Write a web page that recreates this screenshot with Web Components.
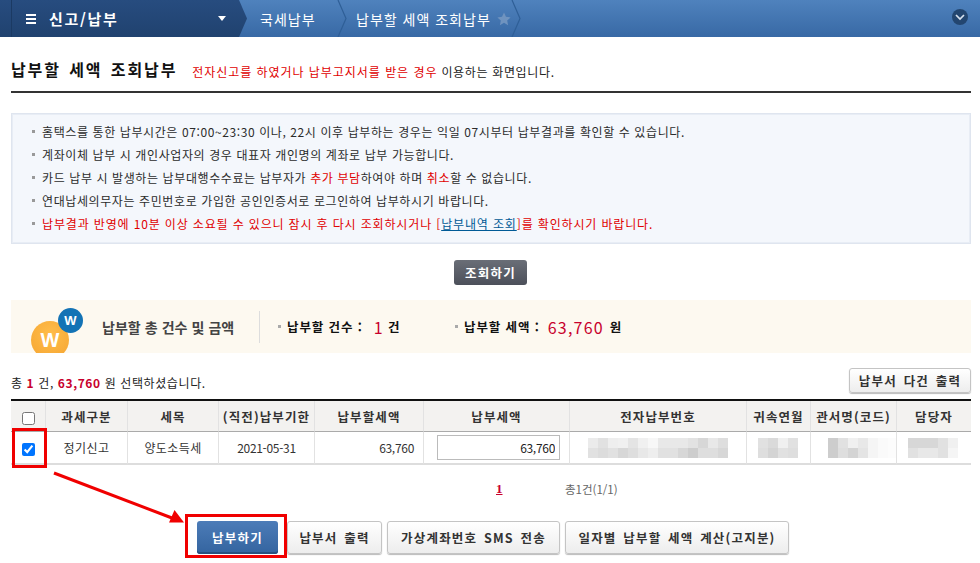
<!DOCTYPE html>
<html lang="ko">
<head>
<meta charset="utf-8">
<title>납부할 세액 조회납부</title>
<style>
  html, body { margin: 0; padding: 0; background: #fff; }
  body {
    width: 980px;
    height: 563px;
    overflow: hidden;
    position: relative;
    font-family: "Noto Sans CJK KR", "Noto Sans", sans-serif;
    font-size: 12px;
    color: #333;
  }
  .red { color: #e00000; }
  .link { color: #005a96; text-decoration: underline; }
  .wide { letter-spacing: .95px; }
  .lead { letter-spacing: .85px; }
  nt-toolbar b { color: #c8002d; }
</style>
</head>
<body>
<nt-topbar></nt-topbar>
<nt-page>
  <nt-heading title="납부할 세액 조회납부">
    <span class="red wide">전자신고를 하였거나 납부고지서를 받은 경우</span> 이용하는 화면입니다.
  </nt-heading>
  <nt-notice>
    <nt-note>홈택스를 통한 납부시간은 07:00~23:30 이나, 22시 이후 납부하는 경우는 익일 07시부터 납부결과를 확인할 수 있습니다.</nt-note>
    <nt-note>계좌이체 납부 시 개인사업자의 경우 대표자 개인명의 계좌로 납부 가능합니다.</nt-note>
    <nt-note>카드 납부 시 발생하는 납부대행수수료는 납부자가 <span class="red">추가 부담</span>하여야 하며 <span class="red">취소</span>할 수 없습니다.</nt-note>
    <nt-note>연대납세의무자는 주민번호로 가입한 공인인증서로 로그인하여 납부하시기 바랍니다.</nt-note>
    <nt-note><span class="red lead">납부결과 반영에 10분 이상 소요될 수 있으니 잠시 후 다시 조회하시거나 [<span class="link">납부내역 조회</span>]를 확인하시기 바랍니다.</span></nt-note>
  </nt-notice>
  <nt-search-row><nt-button variant="dark" width="73">조회하기</nt-button></nt-search-row>
  <nt-summary></nt-summary>
  <nt-toolbar>
    <span slot="info">총 <b>1</b> 건, <b>63,760</b> 원 선택하셨습니다.</span>
    <nt-button slot="action" width="122" height="25">납부서 다건 출력</nt-button>
  </nt-toolbar>
  <nt-table></nt-table>
  <nt-pager></nt-pager>
  <nt-actions>
    <nt-button variant="primary" width="81" height="33">납부하기</nt-button>
    <nt-button width="95" height="33" style="margin-left:4px">납부서 출력</nt-button>
    <nt-button width="173" height="33">가상계좌번호 SMS 전송</nt-button>
    <nt-button width="224" height="33">일자별 납부할 세액 계산(고지분)</nt-button>
  </nt-actions>
</nt-page>
<nt-callouts></nt-callouts>

<script>
class NtTopbar extends HTMLElement {
  connectedCallback() {
    const chevron = `<svg class="sep" width="10" height="37" viewBox="0 0 10 37"><path d="M1 0 L9 18.5 L1 37" fill="none" stroke="#2f5f97" stroke-width="1.2"/></svg>`;
    this.attachShadow({ mode: 'open' }).innerHTML = `
      <style>
        :host {
          display: flex;
          height: 37px;
          align-items: stretch;
          background: linear-gradient(#4f82bd, #3869a5);
          color: #fff;
        }
        .menu {
          width: 247px;
          box-sizing: border-box;
          display: flex;
          align-items: center;
          padding-left: 26px;
          background: linear-gradient(#274c7f, #20426f);
          clip-path: polygon(0 0, 239px 0, 247px 18.5px, 239px 37px, 0 37px);
          position: relative;
        }
        .stripe { position: absolute; left: 11px; top: 0; bottom: 0; width: 1px; background: #1b3a63; }
        .burger { width: 10px; height: 10px; display: block; }
        .name { margin-left: 13px; font-size: 15px; font-weight: 700; letter-spacing: 1.7px; width: 169px; }
        .caret { width: 0; height: 0; border: 4px solid transparent; border-top: 5px solid #fff; border-bottom: 0; }
        .crumb { font-size: 14px; letter-spacing: 1px; display: flex; align-items: center; white-space: nowrap; }
        .sep { display: block; flex: none; }
        .star { margin-left: 6px; display: block; }
        .more {
          margin: 9px 12px 0 auto;
          width: 16px; height: 16px;
          border-radius: 50%;
          background: #234670;
          display: flex; align-items: center; justify-content: center;
        }
      </style>
      <div class="menu">
        <span class="stripe"></span>
        <svg class="burger" viewBox="0 0 10 10"><path d="M0 0h10v2H0zM0 4h10v2H0zM0 8h10v2H0z" fill="#fff"/></svg>
        <span class="name">신고/납부</span>
        <span class="caret"></span>
      </div>
      <span class="crumb" style="margin-left:13px;width:77px">국세납부</span>
      ${chevron}
      <span class="crumb" style="margin-left:9px;width:135px">납부할 세액 조회납부</span>
      <svg class="star" width="14" height="14" viewBox="0 0 24 24" style="align-self:center"><path d="M12 1l3.400 7.300 7.900 1-5.800 5.400 1.500 7.800L12 18.600 5 22.500l1.500-7.800L.7 9.300l7.900-1z" fill="#6f93bf"/></svg>
      ${chevron}
      <span class="more"><svg width="10" height="7" viewBox="0 0 10 7"><path d="M1 1l4 4 4-4" fill="none" stroke="#d8e2ee" stroke-width="1.7"/></svg></span>
    `;
  }
}

class NtPage extends HTMLElement {
  constructor() {
    super();
    this.attachShadow({ mode: 'open' }).innerHTML = `
      <style>
        :host { display: flex; flex-direction: column; padding: 0 9px 0 11px; }
      </style>
      <slot></slot>
    `;
  }
}

class NtHeading extends HTMLElement {
  connectedCallback() {
    this.attachShadow({ mode: 'open' }).innerHTML = `
      <style>
        :host {
          display: flex;
          align-items: center;
          height: 54px;
          border-bottom: 2px solid #333;
          margin-bottom: 20px;
        }
        h1 { margin: 0 15px 0 0; font-size: 16px; font-weight: 700; color: #111; letter-spacing: 1.9px; word-spacing: 2px; white-space: nowrap; position: relative; top: 5px; }
        p { margin: 0; font-size: 12px; letter-spacing: .65px; position: relative; top: 7px; white-space: nowrap; color: #222; }
      </style>
      <h1>${this.getAttribute('title')}</h1>
      <p><slot></slot></p>
    `;
  }
}

class NtNotice extends HTMLElement {
  constructor() {
    super();
    this.attachShadow({ mode: 'open' }).innerHTML = `
      <style>
        :host {
          display: flex;
          flex-direction: column;
          box-sizing: border-box;
          height: 131px;
          padding: 6px 0 0 20px;
          background: #f4f7fc;
          border: 1px solid #dfe5ef;
          box-shadow: inset 0 0 0 1px #e8edf5;
        }
      </style>
      <slot></slot>
    `;
  }
}

class NtNote extends HTMLElement {
  constructor() {
    super();
    this.attachShadow({ mode: 'open' }).innerHTML = `
      <style>
        :host { display: flex; align-items: center; height: 23px; white-space: nowrap; font-size: 12px; letter-spacing: .6px; color: #2b2b2b; }
        i { width: 3px; height: 3px; background: #999; margin-right: 7px; flex: none; }
      </style>
      <i></i><span><slot></slot></span>
    `;
  }
}

class NtButton extends HTMLElement {
  connectedCallback() {
    const w = this.getAttribute('width');
    const h = this.getAttribute('height') || 25;
    this.attachShadow({ mode: 'open' }).innerHTML = `
      <style>
        :host { display: inline-flex; flex: none; }
        button {
          width: ${w}px; height: ${h}px;
          box-sizing: border-box;
          padding: 0;
          font: inherit;
          font-size: 12.5px;
          font-weight: 700;
          letter-spacing: 1.2px;
          word-spacing: 2px;
          white-space: nowrap;
          border-radius: 3px;
          color: #333;
          border: 1px solid #c4c4c4;
          background: linear-gradient(#fff, #ededed);
          box-shadow: 0 1px 1px #bbb;
        }
        :host([variant=dark]) button {
          color: #fff;
          border: 0;
          background: linear-gradient(#6a6e77, #4c505a);
          box-shadow: none;
        }
        :host([variant=primary]) button {
          color: #fff;
          border: 0;
          background: linear-gradient(#4c7cb8, #34649f);
          box-shadow: inset 0 -2px 0 #27507f;
        }
      </style>
      <button type="button"><slot></slot></button>
    `;
  }
}

class NtSearchRow extends HTMLElement {
  constructor() {
    super();
    this.attachShadow({ mode: 'open' }).innerHTML = `
      <style>
        :host { display: flex; justify-content: center; padding: 16px 1px 15px 0; }
      </style>
      <slot></slot>
    `;
  }
}

class NtSummary extends HTMLElement {
  connectedCallback() {
    this.attachShadow({ mode: 'open' }).innerHTML = `
      <style>
        :host {
          display: flex;
          align-items: center;
          height: 53px;
          background: #fdf9f0;
          overflow: hidden;
          white-space: nowrap;
        }
        .logo { flex: none; width: 70px; height: 53px; margin-left: 20px; position: relative; }
        .logo span {
          position: absolute;
          display: flex; align-items: center; justify-content: center;
          border-radius: 50%;
          color: #fff;
          font-family: "Liberation Sans", sans-serif;
          font-weight: 700;
        }
        .o { left: 0; top: 21px; width: 38px; height: 38px; background: radial-gradient(circle at 50% 35%, #ffbd4a, #f5a431); font-size: 20px; }
        .b { left: 27px; top: 8px; width: 25px; height: 25px; background: #1373b5; font-size: 13px; }
        h2 { margin: 0 0 0 1px; width: 157px; font-size: 14px; font-weight: 700; color: #444; letter-spacing: .05px; flex: none; }
        .div { flex: none; width: 1px; height: 32px; background: #ddd; margin-right: 18px; }
        .item { flex: none; display: flex; align-items: center; font-weight: 700; color: #111; font-size: 12.5px; letter-spacing: .9px; }
        .item i { width: 3px; height: 3px; background: #aaa; margin-right: 6px; }
        em { font-style: normal; font-weight: 400; color: #c8002d; font-size: 16px; margin: 0 6px 0 8px; letter-spacing: 1.200px; }
        .count em { margin: 0 4px 0 11px; }
      </style>
      <div class="logo"><span class="o">W</span><span class="b">W</span></div>
      <h2>납부할 총 건수 및 금액</h2>
      <span class="div"></span>
      <div class="item count" style="width:177px"><i></i>납부할 건수 :<em>1</em>건</div>
      <div class="item"><i></i>납부할 세액 :<em>63,760</em>원</div>
    `;
  }
}

class NtToolbar extends HTMLElement {
  constructor() {
    super();
    this.attachShadow({ mode: 'open' }).innerHTML = `
      <style>
        :host { display: flex; align-items: center; justify-content: space-between; margin: 15px 0 6px; height: 25px; }
        .info { font-size: 12px; letter-spacing: .6px; padding-top: 3px; color: #222; }
        ::slotted(span) { white-space: nowrap; }
      </style>
      <span class="info"><slot name="info"></slot></span>
      <slot name="action"></slot>
    `;
  }
}

class NtBlur extends HTMLElement {
  connectedCallback() {
    const rows = this.getAttribute('cells').split('|');
    const grid = rows.map(r => r.trim().split(' ').map(v =>
      `<i style="background:rgb(${v},${v},${v})"></i>`).join('')).join('');
    this.attachShadow({ mode: 'open' }).innerHTML = `
      <style>
        :host {
          display: inline-grid;
          grid-template-columns: repeat(${rows[0].trim().split(' ').length}, 10px);
          grid-auto-rows: 10px;
          vertical-align: middle;
        }
      </style>
      ${grid}
    `;
  }
}

class NtTable extends HTMLElement {
  connectedCallback() {
    const cols = [35, 82, 91, 96, 109, 146, 177, 64, 86, 74];
    const heads = ['과세구분', '세목', '(직전)납부기한', '납부할세액', '납부세액', '전자납부번호', '귀속연월', '관서명(코드)', '담당자'];
    this.attachShadow({ mode: 'open' }).innerHTML = `
      <style>
        :host { display: block; }
        table { border-collapse: separate; border-spacing: 0; table-layout: fixed; width: 960px; border-top: 2px solid #111; }
        th {
          height: 30px; padding: 0;
          background: #f3f2f0;
          font-size: 12.5px; font-weight: 700; color: #333;
          letter-spacing: 1.1px;
          border-bottom: 1px solid #aaa;
          border-right: 1px solid #e2e2e2;
          white-space: nowrap;
        }
        td {
          height: 31px; padding: 0;
          font-size: 12px; color: #333; text-align: center;
          letter-spacing: .4px;
          border-bottom: 2px solid #ddd;
          border-right: 1px solid #e2e2e2;
          white-space: nowrap;
          overflow: hidden;
        }
        th:last-child, td:last-child { border-right: 0; }
        input[type=checkbox] { margin: 0; width: 13px; height: 13px; vertical-align: middle; }
        .num { letter-spacing: -.3px; }
        .amt { text-align: right; padding-right: 9px; box-sizing: border-box; }
        .pay {
          box-sizing: border-box; display: block;
          width: 123px; height: 25px; margin: 0 0 0 13px;
          border: 1px solid #bbb; padding: 0 4px 0 0;
          font: inherit; letter-spacing: -.3px; text-align: right; color: #222;
        }
        .blur { text-align: left; }
      </style>
      <table>
        <colgroup>${cols.map(c => `<col style="width:${c}px">`).join('')}</colgroup>
        <tr><th><input type="checkbox" aria-label="전체선택"></th>${heads.map(h => `<th>${h}</th>`).join('')}</tr>
        <tr>
          <td><input type="checkbox" checked aria-label="선택"></td>
          <td>정기신고</td>
          <td>양도소득세</td>
          <td class="num">2021-05-31</td>
          <td class="amt num">63,760</td>
          <td><input class="pay" value="63,760" aria-label="납부세액"></td>
          <td class="blur" style="padding-left:18px"><nt-blur cells="235 225 238 240 228 240 247 232 232 232 226 215 232 222 | 225 220 225 215 222 232 238 225 225 215 205 222 222 215"></nt-blur></td>
          <td class="blur" style="padding-left:11px"><nt-blur cells="225 218 240 225 | 222 212 225 222"></nt-blur></td>
          <td class="blur" style="padding-left:17px"><nt-blur cells="205 225 240 232 245 250 252 | 205 222 212 228 245 250 252"></nt-blur></td>
          <td class="blur" style="padding-left:11px"><nt-blur cells="215 215 215 225 240 | 225 232 232 225 245"></nt-blur></td>
        </tr>
      </table>
    `;
  }
}

class NtPager extends HTMLElement {
  constructor() {
    super();
    this.attachShadow({ mode: 'open' }).innerHTML = `
      <style>
        :host { display: flex; align-items: center; box-sizing: border-box; height: 50px; padding: 0 0 2px 485px; }
        a { font: 700 13px "Liberation Serif", serif; color: #c8002d; text-decoration: underline; width: 69px; }
        span { font-size: 11.5px; color: #666; white-space: nowrap; }
      </style>
      <a>1</a><span>총1건(1/1)</span>
    `;
  }
}

class NtActions extends HTMLElement {
  constructor() {
    super();
    this.attachShadow({ mode: 'open' }).innerHTML = `
      <style>
        :host { display: flex; gap: 5px; padding: 6px 0 0 186px; }
      </style>
      <slot></slot>
    `;
  }
}

class NtCallouts extends HTMLElement {
  constructor() {
    super();
    this.attachShadow({ mode: 'open' }).innerHTML = `
      <style>
        :host { position: absolute; left: 0; top: 0; width: 980px; height: 563px; pointer-events: none; }
        svg { display: block; }
      </style>
      <svg width="980" height="563" viewBox="0 0 980 563">
        <g fill="none" stroke="#f00000" stroke-width="3">
          <rect x="13.500" y="429.500" width="32" height="37"/>
          <rect x="186.500" y="515.500" width="99" height="41"/>
        </g>
        <line x1="54" y1="473" x2="172" y2="518" stroke="#f00000" stroke-width="3"/>
        <polygon points="184,522.500 169,522.500 174.500,510" fill="#f00000"/>
      </svg>
    `;
  }
}

customElements.define('nt-topbar', NtTopbar);
customElements.define('nt-page', NtPage);
customElements.define('nt-heading', NtHeading);
customElements.define('nt-notice', NtNotice);
customElements.define('nt-note', NtNote);
customElements.define('nt-button', NtButton);
customElements.define('nt-search-row', NtSearchRow);
customElements.define('nt-summary', NtSummary);
customElements.define('nt-toolbar', NtToolbar);
customElements.define('nt-blur', NtBlur);
customElements.define('nt-table', NtTable);
customElements.define('nt-pager', NtPager);
customElements.define('nt-actions', NtActions);
customElements.define('nt-callouts', NtCallouts);
</script>
</body>
</html>
